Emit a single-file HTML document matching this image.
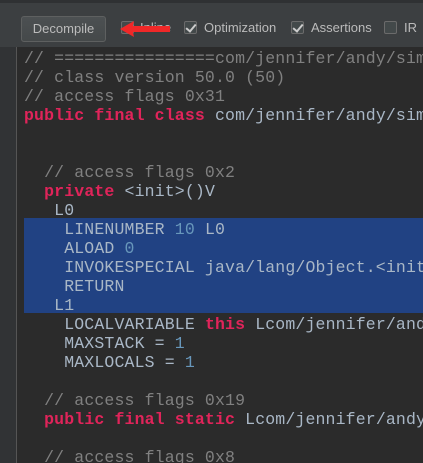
<!DOCTYPE html>
<html><head><meta charset="utf-8"><style>
*{margin:0;padding:0;box-sizing:border-box}
body{width:423px;height:463px;overflow:hidden;background:#2b2b2b;position:relative;font-family:"Liberation Sans",sans-serif}
.tb{position:absolute;left:0;top:0;width:423px;height:47px;background:#3c3f41;border-top:3px solid #2f3133}
.btn{position:absolute;left:21px;top:13px;width:85px;height:26px;border:1px solid #5e6060;border-radius:3px;background:linear-gradient(#4c5052,#45494a);color:#bbb;font-size:13px;line-height:24px;text-align:center}
.cb{position:absolute;top:18px;width:13px;height:13px;background:#43494a;border:1px solid #6b6b6b;border-radius:2px}
.cb.c::after{content:"";position:absolute;left:3px;top:0px;width:4px;height:8px;border:solid #ccc;border-width:0 2px 2px 0;transform:rotate(40deg)}
.lbl{position:absolute;top:17px;color:#bbb;font-size:13px}
.gut{position:absolute;left:0;top:47px;width:17px;height:416px;background:#313335;border-right:1px solid #555}
.code{position:absolute;left:24px;top:49px;width:399px;height:414px;overflow:hidden;font-family:"Liberation Mono",monospace;font-size:16.5px;line-height:19px;color:#a9b7c6;white-space:pre;letter-spacing:0.15px}
.sel{position:absolute;left:24px;top:218px;width:399px;height:95px;background:#214283}
.c{color:#808080}.k{color:#e0245a;font-weight:bold}.n{color:#6897bb}
</style></head><body>
<div class="tb">
<div class="btn">Decompile</div>
<div class="cb c" style="left:121px"></div><span class="lbl" style="left:140px">Inline</span>
<div class="cb c" style="left:184px"></div><span class="lbl" style="left:204px">Optimization</span>
<div class="cb c" style="left:291px"></div><span class="lbl" style="left:311px">Assertions</span>
<div class="cb" style="left:384px"></div><span class="lbl" style="left:404px">IR</span>
<svg style="position:absolute;left:118px;top:16px" width="55" height="20"><polygon points="2,10 16,2 15,7 52,7 52,13 15,13 16,18" fill="#f02828"/></svg>
</div>
<div class="gut"></div>
<div class="sel"></div>
<div class="code"><span class="c">// ================com/jennifer/andy/simple</span>
<span class="c">// class version 50.0 (50)</span>
<span class="c">// access flags 0x31</span>
<span class="k">public final class</span> com/jennifer/andy/simple


  <span class="c">// access flags 0x2</span>
  <span class="k">private</span> &lt;init&gt;()V
   L0
    LINENUMBER <span class="n">10</span> L0
    ALOAD <span class="n">0</span>
    INVOKESPECIAL java/lang/Object.&lt;init&gt;
    RETURN
   L1
    LOCALVARIABLE <span class="k">this</span> Lcom/jennifer/andy
    MAXSTACK = <span class="n">1</span>
    MAXLOCALS = <span class="n">1</span>

  <span class="c">// access flags 0x19</span>
  <span class="k">public final static</span> Lcom/jennifer/andy

  <span class="c">// access flags 0x8</span></div>
</body></html>
